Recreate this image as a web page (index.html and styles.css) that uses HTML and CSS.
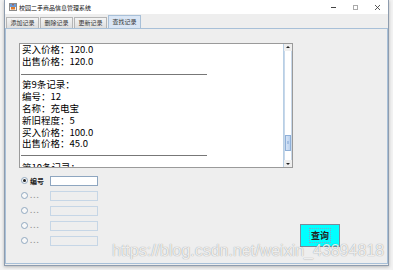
FILE: index.html
```html
<!DOCTYPE html>
<html>
<head>
    <meta charset="utf-8">
    <title>校园二手商品信息管理系统</title>
    <link rel="stylesheet" href="styles.css">
</head>
<body>
    <div class="window">
        <div class="title-bar">
            <svg class="app-icon" width="8" height="8" viewBox="0 0 8 8">
                <rect x="0.5" y="0.5" width="7" height="7" fill="#f4f4f4" stroke="#8a8a8a"/>
                <rect x="1" y="1" width="6" height="3" fill="#6b9bd6"/>
                <path d="M2 4 h4 v2.5 h-4 z" fill="#e07a2a"/>
                <path d="M3 2 q1 -1 2 0" stroke="#c04010" fill="none" stroke-width="0.8"/>
            </svg>
            <span class="title">校园二手商品信息管理系统</span>
            <div class="controls">
                <span class="ctl ctl-min"></span>
                <span class="ctl ctl-max"></span>
                <svg class="ctl ctl-close" width="5" height="5" viewBox="0 0 5 5">
                    <path d="M0 0 L5 5 M5 0 L0 5" stroke="#333" stroke-width="0.8"/>
                </svg>
            </div>
        </div>

        <div class="tabs">
            <div class="tab">添加记录</div>
            <div class="tab">删除记录</div>
            <div class="tab">更新记录</div>
            <div class="tab active">查找记录</div>
        </div>

        <div class="panel">
            <div class="scroll-pane">
                <div class="text-area">
                    <div class="line">买入价格：120.0</div>
                    <div class="line">出售价格：120.0</div>
                    <div class="line sep"></div>
                    <div class="line">第9条记录：</div>
                    <div class="line">编号：12</div>
                    <div class="line">名称：充电宝</div>
                    <div class="line">新旧程度：5</div>
                    <div class="line">买入价格：100.0</div>
                    <div class="line">出售价格：45.0</div>
                    <div class="line sep"></div>
                    <div class="line">第10条记录：</div>
                </div>
                <div class="scrollbar">
                    <div class="arrow arrow-up"></div>
                    <div class="track">
                        <div class="thumb"></div>
                    </div>
                    <div class="arrow arrow-down"></div>
                </div>
            </div>

            <div class="query-row">
                <div class="options">
                    <div class="option">
                        <span class="radio checked"></span>
                        <span class="opt-label">编号</span>
                        <input class="field" type="text">
                    </div>
                    <div class="option">
                        <span class="radio"></span>
                        <span class="opt-label dim">...</span>
                        <input class="field" type="text" disabled>
                    </div>
                    <div class="option">
                        <span class="radio"></span>
                        <span class="opt-label dim">...</span>
                        <input class="field" type="text" disabled>
                    </div>
                    <div class="option">
                        <span class="radio"></span>
                        <span class="opt-label dim">...</span>
                        <input class="field" type="text" disabled>
                    </div>
                    <div class="option">
                        <span class="radio"></span>
                        <span class="opt-label dim">...</span>
                        <input class="field" type="text" disabled>
                    </div>
                </div>
                <button class="query-btn"><span>查询</span></button>
            </div>
        </div>
    </div>

    <div class="watermark">https://blog.csdn.net/weixin_43894818</div>
</body>
</html>
```

FILE: styles.css
```css
body {
    margin: 0;
    width: 393px;
    height: 270px;
    overflow: hidden;
    position: relative;
    background-color: #f2f2f2;
    font-family: "Noto Sans CJK SC", sans-serif;
}

.window {
    margin-left: 4px;
    width: 383px;
    height: 265px;
    display: flex;
    flex-direction: column;
    background-color: #eeeeee;
    border: 1px solid #8e9cae;
    border-top: none;
    box-shadow: 0 1px 3px rgba(0, 0, 0, 0.25);
}

.title-bar {
    height: 14px;
    display: flex;
    align-items: center;
    padding: 0 8px 0 4px;
    background-color: #ffffff;
}

.app-icon {
    display: block;
}

.title {
    margin-left: 2px;
    font-size: 6px;
    color: #111;
}

.controls {
    margin-left: auto;
    display: flex;
    align-items: center;
    gap: 17px;
}

.ctl {
    display: block;
    width: 5px;
}

.ctl-min {
    height: 1px;
    background-color: #444;
}

.ctl-max {
    height: 5px;
    box-sizing: border-box;
    border: 1px solid #aaa;
}

.tabs {
    height: 14px;
    display: flex;
    align-items: flex-end;
    gap: 1px;
    padding-left: 1px;
}

.tab {
    width: 31px;
    height: 10px;
    line-height: 10px;
    text-align: center;
    font-size: 6px;
    color: #333;
    border: 1px solid #b5b5b5;
    border-bottom: none;
    background: linear-gradient(#f4f4f4, #dedede);
}

.tab.active {
    height: 12px;
    line-height: 12px;
    border-color: #a8c0d8;
    background: #dae6f5;
}

.panel {
    flex: 1;
    margin-bottom: 1px;
    padding: 14px 0 0 13px;
    border: 1px solid #a8c0d8;
    background-color: #eeeeee;
}

.scroll-pane {
    width: 272px;
    height: 123px;
    display: flex;
    border: 1px solid #9a9a9a;
    background-color: #ffffff;
}

.text-area {
    flex: 1;
    overflow: hidden;
    padding-left: 2px;
    font-size: 9.5px;
    line-height: 11.8px;
    color: #000;
}

.line {
    height: 11.8px;
    white-space: nowrap;
}

.sep {
    width: 186px;
    margin-left: -1px;
    background: linear-gradient(transparent 5.5px, #777 5.5px, #777 6.5px, transparent 6.5px);
}

.scrollbar {
    width: 8px;
    display: flex;
    flex-direction: column;
    border-left: 1px solid #b8cfe5;
    background-color: #f4f4f4;
}

.arrow {
    height: 7px;
    position: relative;
    background-color: #eeeeee;
}

.arrow::after {
    content: "";
    position: absolute;
    left: 2px;
    border-left: 2px solid transparent;
    border-right: 2px solid transparent;
}

.arrow-up::after {
    top: 2px;
    border-bottom: 2px solid #222;
}

.arrow-down::after {
    top: 3px;
    border-top: 2px solid #222;
}

.track {
    flex: 1;
    border-left: 1px solid #c8d8ea;
    border-right: 1px solid #c8d8ea;
    background-color: #ffffff;
}

.thumb {
    margin-top: 84px;
    height: 16px;
    box-sizing: border-box;
    border: 1px solid #8fb0d8;
    background: linear-gradient(90deg, #d6e4f6, #bcd2ee);
    position: relative;
}

.thumb::after {
    content: "";
    position: absolute;
    left: 1px;
    right: 1px;
    top: 5px;
    height: 3px;
    background-color: #a4bfe2;
}

.query-row {
    display: flex;
    align-items: flex-end;
    margin-top: 5px;
}

.options {
    padding-left: 2px;
}

.option {
    height: 15px;
    display: flex;
    align-items: center;
}

.radio {
    width: 7px;
    height: 7px;
    box-sizing: border-box;
    border-radius: 50%;
    border: 1px solid #90a8c0;
    background-color: #f8f8f8;
    position: relative;
}

.radio.checked::after {
    content: "";
    position: absolute;
    left: 1px;
    top: 1px;
    width: 3px;
    height: 3px;
    border-radius: 50%;
    background-color: #222;
}

.opt-label {
    width: 20px;
    margin-left: 2px;
    font-size: 7px;
    line-height: 10px;
    font-weight: bold;
    color: #222;
}

.opt-label.dim {
    font-family: "Liberation Sans", sans-serif;
    font-size: 8px;
    color: #9a9a9a;
    letter-spacing: 1px;
}

.field {
    width: 48px;
    height: 10px;
    margin: 0;
    padding: 0;
    box-sizing: border-box;
    border: 1px solid #8ea6c0;
    background-color: #ffffff;
}

.field:disabled {
    border-color: #c6d6e6;
    background-color: #eeeeee;
}

.query-btn {
    width: 40px;
    height: 23px;
    margin: 0 47px 1px auto;
    padding: 0;
    border: 1px solid #7a8a99;
    background-color: #00ffff;
    font-family: "Noto Sans CJK SC", sans-serif;
    font-size: 9px;
    font-weight: bold;
    color: #222;
}

.query-btn span {
    padding: 0 1px;
    border: 1px dotted #7fa6c8;
}

.watermark {
    position: absolute;
    left: 112px;
    top: 242px;
    font-family: "Liberation Sans", sans-serif;
    font-size: 16px;
    color: rgba(255, 255, 255, 0.85);
    text-shadow: 0 0 1px rgba(0, 0, 0, 0.45);
    white-space: nowrap;
}
```
